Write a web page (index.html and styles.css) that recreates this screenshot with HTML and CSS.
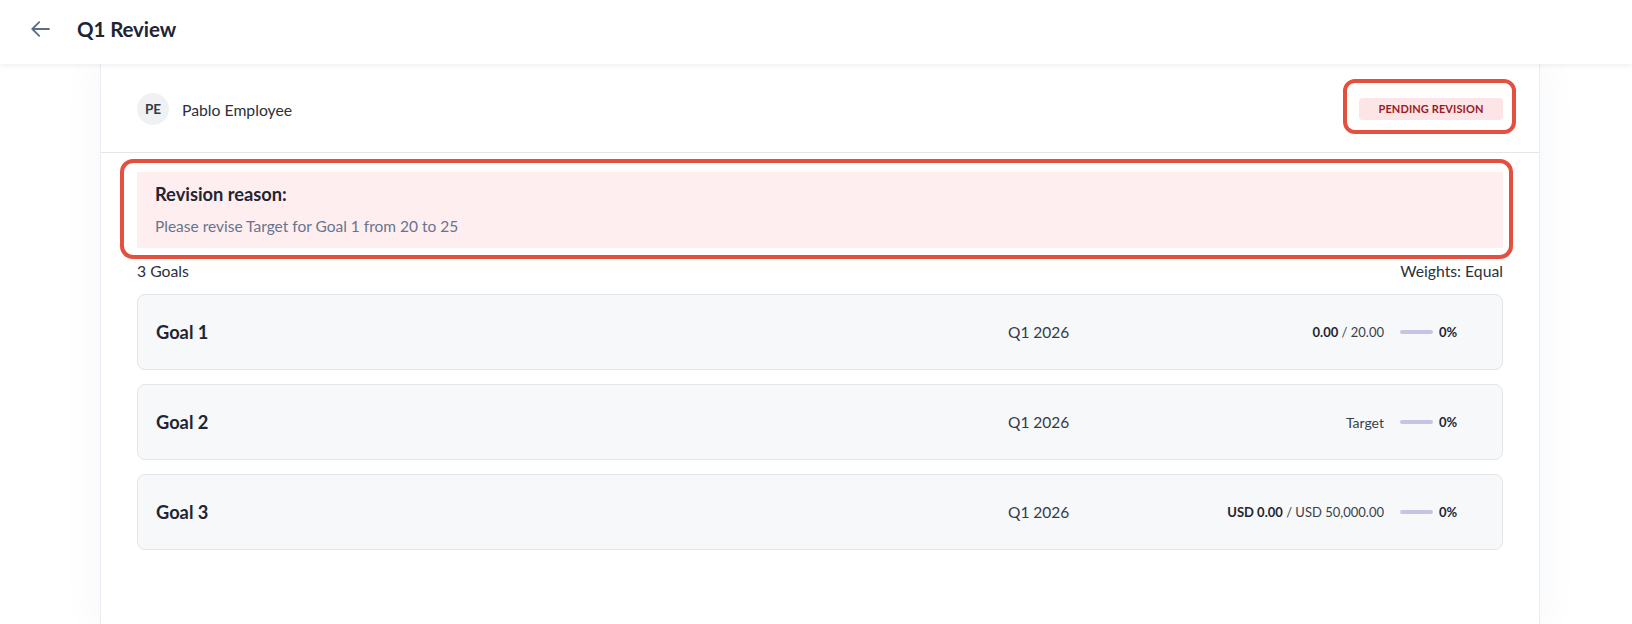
FILE: index.html
```html
<!DOCTYPE html>
<html lang="en">
<head>
<meta charset="utf-8">
<title>Q1 Review</title>
<link rel="stylesheet" href="styles.css">
</head>
<body>
<header class="topbar">
  <button class="back" aria-label="Back">
    <svg width="19" height="16" viewBox="0 0 19 16" fill="none" stroke="currentColor" stroke-width="1.8" stroke-linecap="round" stroke-linejoin="round"><path d="M18 8H1.5M8.2 1.2L1.3 8 8.2 14.8"/></svg>
  </button>
  <h1 class="title">Q1 Review</h1>
</header>
<main class="page">
  <section class="card">
    <div class="card-head">
      <div class="person">
        <span class="avatar">PE</span>
        <span class="name">Pablo Employee</span>
      </div>
      <div class="badge-wrap">
        <span class="badge">Pending Revision</span>
      </div>
    </div>
    <div class="card-body">
      <div class="reason-wrap">
        <div class="reason">
          <div class="reason-title">Revision reason:</div>
          <div class="reason-text">Please revise Target for Goal 1 from 20 to 25</div>
        </div>
      </div>
      <div class="summary">
        <span>3 Goals</span>
        <span>Weights: Equal</span>
      </div>
      <div class="goals">
        <div class="goal">
          <div class="goal-name">Goal 1</div>
          <div class="goal-period">Q1 2026</div>
          <div class="goal-value"><b>0.00</b> / 20.00</div>
          <div class="goal-bar"></div>
          <div class="goal-pct">0%</div>
        </div>
        <div class="goal">
          <div class="goal-name">Goal 2</div>
          <div class="goal-period">Q1 2026</div>
          <div class="goal-value goal-value-label">Target</div>
          <div class="goal-bar"></div>
          <div class="goal-pct">0%</div>
        </div>
        <div class="goal">
          <div class="goal-name">Goal 3</div>
          <div class="goal-period">Q1 2026</div>
          <div class="goal-value"><b>USD 0.00</b> / USD 50,000.00</div>
          <div class="goal-bar"></div>
          <div class="goal-pct">0%</div>
        </div>
      </div>
    </div>
  </section>
</main>
</body>
</html>
```

FILE: styles.css
```css
* { box-sizing: border-box; }
html, body { margin: 0; padding: 0; }
body {
  font-family: Lato, "Noto Sans", sans-serif;
  color: #2b303b;
  background: #ffffff;
  height: 624px;
  overflow: hidden;
}
.topbar {
  position: relative;
  z-index: 2;
  height: 64px;
  display: flex;
  align-items: center;
  padding: 0 0 6px 31px;
  background: #fff;
  box-shadow: 0 2px 5px rgba(30, 41, 80, 0.07);
}
.back {
  border: 0;
  background: none;
  padding: 0;
  margin: 0;
  color: #5d6d88;
  display: flex;
  align-items: center;
  width: 19px;
  height: 16px;
}
.title {
  margin: 0 0 0 27px;
  font-size: 20.5px;
  font-weight: 700;
  color: #1d2432;
  letter-spacing: -0.1px;
}
.page {
  padding: 0 92px 0 100px;
}
.card {
  width: 1440px;
  height: 560px;
  background: #fff;
  border-left: 1px solid #ececf3;
  border-right: 1px solid #ececf3;
  box-shadow: 0 0 40px rgba(40, 50, 110, 0.05);
}
.card-head {
  height: 89px;
  padding: 2px 36px 0 36px;
  display: flex;
  align-items: center;
  justify-content: space-between;
  border-bottom: 1px solid #e4e6ea;
}
.person {
  display: flex;
  align-items: center;
  gap: 13px;
}
.avatar {
  width: 32px;
  height: 32px;
  border-radius: 50%;
  background: #f0f1f3;
  display: flex;
  align-items: center;
  justify-content: center;
  font-size: 13.5px;
  font-weight: 700;
  color: #333a46;
}
.name {
  font-size: 15.75px;
  color: #2b303b;
}
.badge-wrap {
  position: relative;
}
.badge-wrap::after {
  content: "";
  position: absolute;
  left: -16px;
  right: -13px;
  top: -19px;
  bottom: -14px;
  border: 4px solid #e4503e;
  border-radius: 12px;
  pointer-events: none;
}
.badge {
  display: block;
  width: 144px;
  height: 22px;
  line-height: 22px;
  text-align: center;
  border-radius: 4px;
  background: #fce4e7;
  color: #9a1b1e;
  font-size: 11px;
  font-weight: 700;
  text-transform: uppercase;
  letter-spacing: 0.1px;
}
.card-body {
  padding: 19px 36px 0 36px;
}
.reason-wrap {
  position: relative;
}
.reason-wrap::after {
  content: "";
  position: absolute;
  left: -17px;
  right: -10px;
  top: -13px;
  bottom: -11px;
  border: 4px solid #e4503e;
  border-radius: 13px;
  pointer-events: none;
}
.reason {
  background: #feeeef;
  height: 76px;
  padding: 10px 19px 0 18px;
}
.reason-title {
  font-size: 18.25px;
  line-height: 25px;
  font-weight: 700;
  color: #1f2532;
}
.reason-text {
  margin-top: 9px;
  font-size: 15.5px;
  line-height: 20px;
  color: #66758f;
}
.summary {
  margin-top: 13px;
  display: flex;
  justify-content: space-between;
  font-size: 15.75px;
  line-height: 20px;
  color: #2b303b;
}
.goals {
  margin-top: 13px;
  display: flex;
  flex-direction: column;
  gap: 14px;
}
.goal {
  height: 76px;
  display: flex;
  align-items: center;
  padding: 0 19px 0 18px;
  background: #f7f8fa;
  border: 1px solid #e2e5ea;
  border-radius: 8px;
}
.goal-name {
  flex: 1;
  font-size: 18.25px;
  font-weight: 700;
  color: #1f2532;
}
.goal-period {
  width: 200px;
  font-size: 15.5px;
  color: #343b48;
}
.goal-value {
  width: 176px;
  text-align: right;
  font-size: 13px;
  color: #3a404c;
}
.goal-value-label {
  font-size: 14px;
}
.goal-value b {
  color: #1f2532;
}
.goal-bar {
  width: 33px;
  height: 4px;
  margin: 0 6px 0 16px;
  border-radius: 2px;
  background: #c8c3e5;
}
.goal-pct {
  width: 44px;
  font-size: 13px;
  font-weight: 700;
  color: #1f2532;
}
```
